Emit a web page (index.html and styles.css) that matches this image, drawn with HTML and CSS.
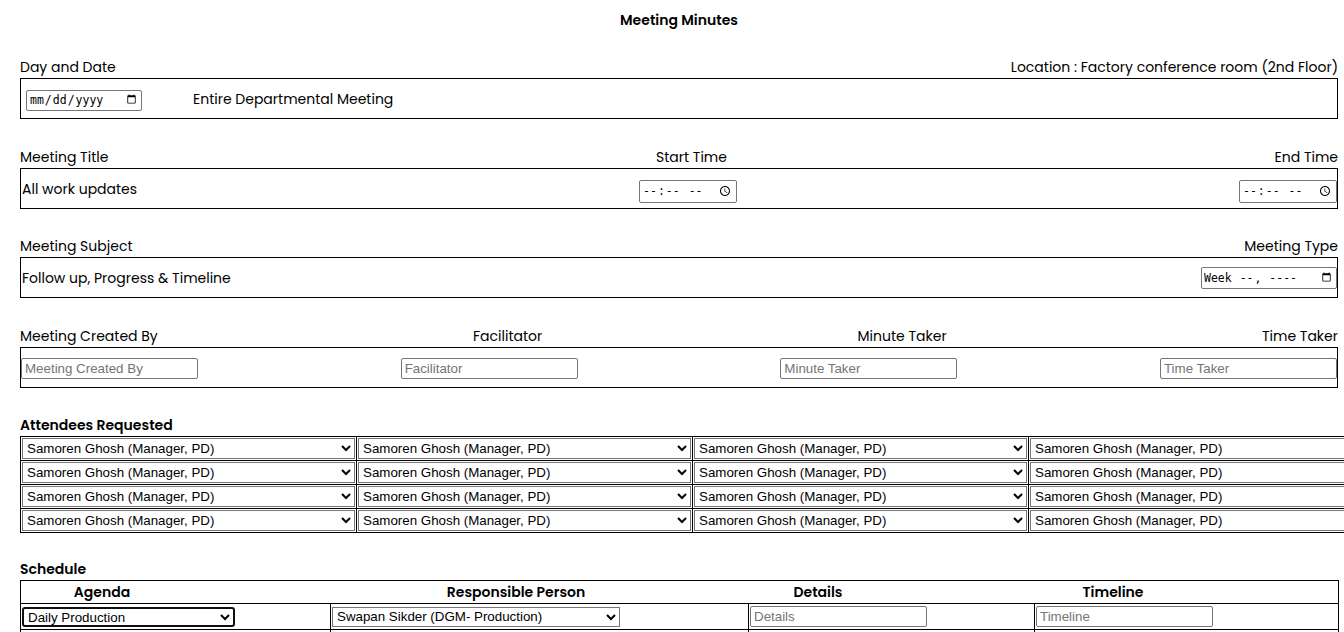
FILE: index.html
```
<!DOCTYPE html>
<html lang="en">
<head>
<meta charset="utf-8">
<title>Meeting Minutes</title>
<link rel="stylesheet" href="styles.css">
</head>
<body>
<div class="page">
  <h1 class="title">Meeting Minutes</h1>

  <section class="block">
    <div class="labels">
      <span>Day and Date</span>
      <span>Location : Factory conference room (2nd Floor)</span>
    </div>
    <div class="box box-date">
      <input type="date" class="in-date">
      <span class="dept">Entire Departmental Meeting</span>
    </div>
  </section>

  <section class="block block-2">
    <div class="labels">
      <span>Meeting Title</span>
      <span>Start Time</span>
      <span>End Time</span>
    </div>
    <div class="box">
      <span class="val">All work updates</span>
      <input type="time" class="in-time">
      <input type="time" class="in-time">
    </div>
  </section>

  <section class="block block-3">
    <div class="labels">
      <span>Meeting Subject</span>
      <span>Meeting Type</span>
    </div>
    <div class="box">
      <span class="val">Follow up, Progress &amp; Timeline</span>
      <input type="week" class="in-week">
    </div>
  </section>

  <section class="block block-4">
    <div class="labels">
      <span>Meeting Created By</span>
      <span>Facilitator</span>
      <span>Minute Taker</span>
      <span>Time Taker</span>
    </div>
    <div class="box">
      <input type="text" class="in-text" placeholder="Meeting Created By">
      <input type="text" class="in-text" placeholder="Facilitator">
      <input type="text" class="in-text" placeholder="Minute Taker">
      <input type="text" class="in-text" placeholder="Time Taker">
    </div>
  </section>

  <section class="block block-att">
    <div class="heading">Attendees Requested</div>
    <table class="att">
      <tbody>
        <tr>
          <td><select class="sel-att"><option>Samoren Ghosh (Manager, PD)</option></select></td>
          <td><select class="sel-att"><option>Samoren Ghosh (Manager, PD)</option></select></td>
          <td><select class="sel-att"><option>Samoren Ghosh (Manager, PD)</option></select></td>
          <td><select class="sel-att"><option>Samoren Ghosh (Manager, PD)</option></select></td>
        </tr>
        <tr>
          <td><select class="sel-att"><option>Samoren Ghosh (Manager, PD)</option></select></td>
          <td><select class="sel-att"><option>Samoren Ghosh (Manager, PD)</option></select></td>
          <td><select class="sel-att"><option>Samoren Ghosh (Manager, PD)</option></select></td>
          <td><select class="sel-att"><option>Samoren Ghosh (Manager, PD)</option></select></td>
        </tr>
        <tr>
          <td><select class="sel-att"><option>Samoren Ghosh (Manager, PD)</option></select></td>
          <td><select class="sel-att"><option>Samoren Ghosh (Manager, PD)</option></select></td>
          <td><select class="sel-att"><option>Samoren Ghosh (Manager, PD)</option></select></td>
          <td><select class="sel-att"><option>Samoren Ghosh (Manager, PD)</option></select></td>
        </tr>
        <tr>
          <td><select class="sel-att"><option>Samoren Ghosh (Manager, PD)</option></select></td>
          <td><select class="sel-att"><option>Samoren Ghosh (Manager, PD)</option></select></td>
          <td><select class="sel-att"><option>Samoren Ghosh (Manager, PD)</option></select></td>
          <td><select class="sel-att"><option>Samoren Ghosh (Manager, PD)</option></select></td>
        </tr>
      </tbody>
    </table>
  </section>

  <section class="block block-sched">
    <div class="heading">Schedule</div>
    <table class="sched">
      <colgroup>
        <col class="c1"><col class="c2"><col class="c3"><col class="c4">
      </colgroup>
      <thead>
        <tr>
          <th colspan="4">
            <div class="sched-head">
              <span class="h1">Agenda</span>
              <span class="h2">Responsible Person</span>
              <span class="h3">Details</span>
              <span class="h4">Timeline</span>
            </div>
          </th>
        </tr>
      </thead>
      <tbody>
        <tr>
          <td><select class="sel-agenda ring"><option>Daily Production</option></select></td>
          <td><select class="sel-person"><option>Swapan Sikder (DGM- Production)</option></select></td>
          <td><input type="text" class="in-sched" placeholder="Details"></td>
          <td><input type="text" class="in-sched" placeholder="Timeline"></td>
        </tr>
        <tr>
          <td><select class="sel-agenda"><option>Quality Report</option></select></td>
          <td><select class="sel-person"><option>Swapan Sikder (DGM- Production)</option></select></td>
          <td><input type="text" class="in-sched" placeholder="Details"></td>
          <td><input type="text" class="in-sched" placeholder="Timeline"></td>
        </tr>
      </tbody>
    </table>
  </section>
</div>
</body>
</html>
```

FILE: styles.css
```
html, body {
  margin: 0;
  padding: 0;
  background: #fff;
  overflow: hidden;
}

.page {
  width: 1318px;
  margin-left: 20px;
  padding-top: 10px;
  font-family: "Poppins", "Inter", "Open Sans", sans-serif;
  font-size: 14px;
  color: #000;
}

.title {
  margin: 0;
  font-size: 14px;
  font-weight: 600;
  line-height: 20px;
  text-align: center;
}

.block { margin-top: 27px; }
.block-2 { margin-top: 28px; }
.block-3 { margin-top: 27px; }
.block-4 { margin-top: 28px; }
.block-att { margin-top: 27px; }
.block-sched { margin-top: 26px; }

.labels {
  display: flex;
  justify-content: space-between;
  line-height: 21px;
  height: 21px;
}

.box {
  box-sizing: border-box;
  height: 41px;
  border: 1px solid #000;
  display: flex;
  align-items: center;
  justify-content: space-between;
}

.box-date {
  justify-content: flex-start;
  padding-left: 5px;
}

.dept {
  margin-left: 51px;
  margin-top: 1px;
}

.val {
  padding-left: 1px;
  margin-top: 1px;
}

input, select {
  font-family: "Liberation Sans", Arial, sans-serif;
  font-size: 13.333px;
  color: #000;
  margin: 0;
}

.in-date, .in-time, .in-week {
  box-sizing: border-box;
  font-family: "DejaVu Sans Mono", monospace;
  font-size: 11.5px;
  border: 1px solid #767676;
  border-radius: 2px;
  padding: 1px 2px;
  background: #fff;
}

.in-date { width: 116px; height: 21px; margin-top: 3px; }
.in-time { width: 98px; height: 23px; margin-top: 5px; }
.in-week { width: 136px; height: 22px; margin-top: 1px; }

.in-text {
  box-sizing: border-box;
  width: 177px;
  height: 21px;
  border: 1px solid #767676;
  border-radius: 2px;
  padding: 1px 3px;
  margin-top: 1px;
}

.in-text::placeholder, .in-sched::placeholder {
  color: #757575;
}

.heading {
  font-weight: 600;
  line-height: 21px;
  height: 21px;
}

.att {
  border-collapse: collapse;
  border: 1px solid #000;
}

.att td {
  border: 1px solid #000;
  padding: 1px;
}

.sel-att {
  box-sizing: border-box;
  display: block;
  width: 333px;
  height: 21px;
  border: 1px solid #767676;
  border-radius: 0;
  padding: 0;
  background: #fff;
}

.sched {
  width: 1318px;
  border-collapse: collapse;
  border: 1px solid #000;
  table-layout: fixed;
}

.c1 { width: 310px; }
.c2 { width: 418px; }
.c3 { width: 286px; }
.c4 { width: 304px; }

.sched th {
  padding: 0;
  border: 1px solid #000;
  font-weight: 600;
  height: 22px;
}

.sched-head {
  display: grid;
  grid-template-columns: 162px 233px 200px 102px 200px 95px 200px;
  line-height: 22px;
}

.sched-head .h1 { grid-column: 1; text-align: center; }
.sched-head .h2 { grid-column: 3; text-align: center; }
.sched-head .h3 { grid-column: 5; text-align: center; }
.sched-head .h4 { grid-column: 7; text-align: center; }

.sched td {
  border: 1px solid #000;
  padding: 0 1px;
  height: 25px;
  vertical-align: middle;
}

.sel-agenda {
  box-sizing: border-box;
  display: block;
  width: 213px;
  height: 20px;
  border: 1px solid #767676;
  border-radius: 0;
  padding: 0;
  background: #fff;
}

.sel-agenda.ring {
  border: 2px solid #101010;
  border-radius: 3px;
  padding: 0;
}

.sel-person {
  box-sizing: border-box;
  display: block;
  width: 288px;
  height: 20px;
  border: 1px solid #767676;
  border-radius: 0;
  padding: 0;
  background: #fff;
}

.in-sched {
  box-sizing: border-box;
  display: block;
  width: 177px;
  height: 21px;
  border: 1px solid #767676;
  border-radius: 2px;
  padding: 1px 3px;
}
```
